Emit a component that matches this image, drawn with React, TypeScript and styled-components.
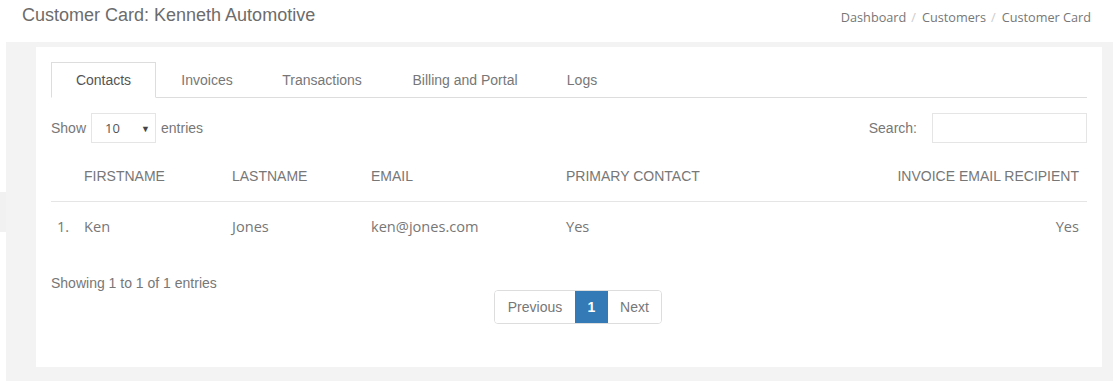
import React from "react";
import styled, { createGlobalStyle } from "styled-components";

const Global = createGlobalStyle`
  html, body { margin: 0; padding: 0; background: #fff; }
  body { font-family: "Liberation Sans", Arial, sans-serif; color: #777; }
  * { box-sizing: border-box; }
`;

const Page = styled.div`
  width: 1113px;
  height: 381px;
  display: flex;
  flex-direction: column;
`;

const TopBar = styled.div`
  height: 42px;
  display: flex;
  align-items: flex-start;
  justify-content: space-between;
  padding: 5px 22px 0 22px;
`;

const Title = styled.h1`
  margin: 0;
  font-family: "Liberation Sans", Arial, sans-serif;
  font-weight: normal;
  font-size: 18px;
  line-height: 20px;
  color: #6c6c6c;
`;

const Crumbs = styled.ol`
  margin: 0;
  padding: 3px 0 0 0;
  list-style: none;
  display: flex;
  font-family: "Open Sans", sans-serif;
  font-size: 12.7px;
  color: #777;
`;

const Crumb = styled.li`
  & + &::before {
    content: "/";
    color: #ccc;
    padding: 0 6px 0 5px;
  }
`;

const Body = styled.div`
  flex: 1;
  display: flex;
`;

const Edge = styled.div`
  width: 6px;
  display: flex;
  flex-direction: column;
  padding-top: 150px;
`;

const EdgeTab = styled.div`
  height: 40px;
  background: #f1f1f1;
`;

const Canvas = styled.div`
  flex: 1;
  background: #f3f3f3;
  padding: 5px 11px 14px 30px;
  display: flex;
`;

const Card = styled.div`
  flex: 1;
  background: #fff;
  padding: 15px;
`;

const Tabs = styled.ul`
  margin: 0;
  padding: 0;
  list-style: none;
  display: flex;
  border-bottom: 1px solid #ddd;
  height: 36px;
`;

const Tab = styled.li<{ $active?: boolean; $w: number }>`
  width: ${(p) => p.$w}px;
  height: 36px;
  margin-bottom: -1px;
  display: flex;
  align-items: center;
  justify-content: center;
  font-size: 14px;
  color: ${(p) => (p.$active ? "#555" : "#777")};
  background: ${(p) => (p.$active ? "#fff" : "transparent")};
  border: 1px solid ${(p) => (p.$active ? "#ddd" : "transparent")};
  border-bottom-color: ${(p) => (p.$active ? "#fff" : "transparent")};
`;

const Controls = styled.div`
  display: flex;
  justify-content: space-between;
  align-items: center;
  margin-top: 15px;
  font-size: 14px;
  color: #777;
`;

const Label = styled.label`
  display: flex;
  align-items: center;
  gap: 5px;
`;

const Select = styled.div`
  width: 65px;
  height: 30px;
  border: 1px solid #e5e5e5;
  display: flex;
  align-items: center;
  justify-content: space-between;
  padding: 0 5px 0 13px;
  font-family: "Open Sans", sans-serif;
  font-size: 13px;
  color: #555;
`;

const Caret = styled.span`
  font-size: 9px;
  color: #444;
`;

const SearchBox = styled.div`
  width: 155px;
  height: 30px;
  border: 1px solid #e5e5e5;
  margin-left: 10px;
`;

const Row = styled.div<{ $head?: boolean }>`
  display: grid;
  grid-template-columns: 33px 148px 139px 195px 1fr auto;
  align-items: ${(p) => (p.$head ? "end" : "center")};
  height: ${(p) => (p.$head ? "59px" : "47px")};
  padding-right: 8px;
  padding-bottom: ${(p) => (p.$head ? "17px" : "0")};
  border-bottom: ${(p) => (p.$head ? "1px solid #e5e5e5" : "none")};
  font-family: ${(p) => (p.$head ? '"Liberation Sans", Arial, sans-serif' : '"Open Sans", sans-serif')};
  font-size: ${(p) => (p.$head ? "14px" : "14.6px")};
  line-height: 16px;
  color: #777;
`;

const Cell = styled.div<{ $right?: boolean; $pad?: number }>`
  text-align: ${(p) => (p.$right ? "right" : "left")};
  padding-left: ${(p) => p.$pad ?? 0}px;
  white-space: nowrap;
`;

const Info = styled.div`
  margin-top: 26px;
  font-size: 14px;
  color: #777;
`;

const PagerWrap = styled.div`
  display: flex;
  justify-content: center;
  margin-top: -1px;
  padding-left: 18px;
`;

const Pager = styled.div`
  display: flex;
  border: 1px solid #ddd;
  border-radius: 4px;
  overflow: hidden;
  height: 34px;
`;

const PageBtn = styled.div<{ $active?: boolean; $w: number }>`
  width: ${(p) => p.$w}px;
  display: flex;
  align-items: center;
  justify-content: center;
  font-size: 14px;
  color: ${(p) => (p.$active ? "#fff" : "#777")};
  background: ${(p) => (p.$active ? "#337ab7" : "#fff")};
  font-weight: ${(p) => (p.$active ? "bold" : "normal")};
`;

const tabs = [
  { label: "Contacts", w: 105, active: true },
  { label: "Invoices", w: 102 },
  { label: "Transactions", w: 128 },
  { label: "Billing and Portal", w: 158 },
  { label: "Logs", w: 76 },
];

export default function App() {
  return (
    <Page>
      <Global />
      <TopBar>
        <Title>Customer Card: Kenneth Automotive</Title>
        <Crumbs>
          <Crumb>Dashboard</Crumb>
          <Crumb>Customers</Crumb>
          <Crumb>Customer Card</Crumb>
        </Crumbs>
      </TopBar>
      <Body>
        <Edge>
          <EdgeTab />
        </Edge>
        <Canvas>
          <Card>
            <Tabs>
              {tabs.map((t) => (
                <Tab key={t.label} $w={t.w} $active={t.active}>
                  {t.label}
                </Tab>
              ))}
            </Tabs>
            <Controls>
              <Label>
                Show
                <Select>
                  <span>10</span>
                  <Caret>▼</Caret>
                </Select>
                entries
              </Label>
              <Label>
                Search:
                <SearchBox />
              </Label>
            </Controls>
            <Row $head>
              <Cell />
              <Cell>FIRSTNAME</Cell>
              <Cell>LASTNAME</Cell>
              <Cell>EMAIL</Cell>
              <Cell>PRIMARY CONTACT</Cell>
              <Cell $right>INVOICE EMAIL RECIPIENT</Cell>
            </Row>
            <Row>
              <Cell $pad={6}>1.</Cell>
              <Cell>Ken</Cell>
              <Cell>Jones</Cell>
              <Cell>ken@jones.com</Cell>
              <Cell>Yes</Cell>
              <Cell $right>Yes</Cell>
            </Row>
            <Info>Showing 1 to 1 of 1 entries</Info>
            <PagerWrap>
              <Pager>
                <PageBtn $w={80}>Previous</PageBtn>
                <PageBtn $w={33} $active>
                  1
                </PageBtn>
                <PageBtn $w={53}>Next</PageBtn>
              </Pager>
            </PagerWrap>
          </Card>
        </Canvas>
      </Body>
    </Page>
  );
}
